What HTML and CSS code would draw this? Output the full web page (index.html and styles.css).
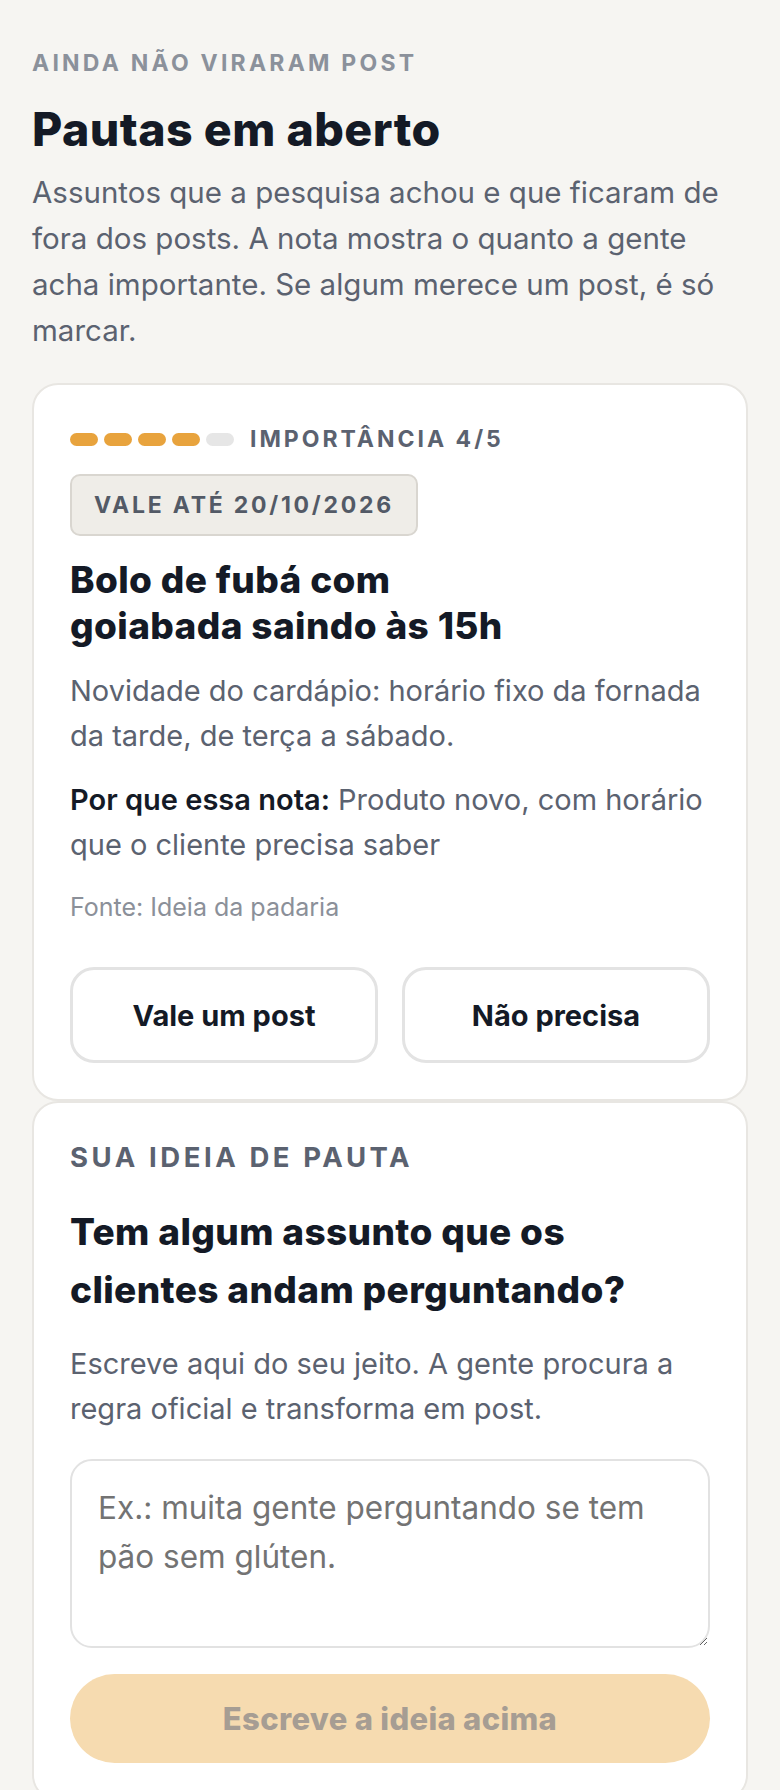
FILE: index.html
```html
<!DOCTYPE html>
<html lang="pt-BR">

<head>
    <meta charset="utf-8">
    <title>Pautas em aberto</title>
    <link rel="stylesheet" href="styles.css">
    <meta name="viewport" content="width=device-width, initial-scale=1">
</head>

<body>
    <main class="page">
        <p class="eyebrow">Ainda não viraram post</p>
        <h1 class="page-title">Pautas em aberto</h1>
        <p class="intro">
            Assuntos que a pesquisa achou e que ficaram de fora dos posts. A nota mostra o quanto a gente
            acha importante. Se algum merece um post, é só marcar.
        </p>

        <section class="card">
            <div class="score">
                <span class="pips">
                    <span class="pip on"></span>
                    <span class="pip on"></span>
                    <span class="pip on"></span>
                    <span class="pip on"></span>
                    <span class="pip"></span>
                </span>
                <span class="score-label">Importância 4/5</span>
            </div>
            <span class="badge">Vale até 20/10/2026</span>
            <h2 class="card-title short">Bolo de fubá com goiabada saindo às 15h</h2>
            <p class="card-text">Novidade do cardápio: horário fixo da fornada da tarde, de terça a sábado.</p>
            <p class="card-text"><strong>Por que essa nota:</strong> Produto novo, com horário que o cliente precisa saber</p>
            <p class="source">Fonte: Ideia da padaria</p>
            <div class="actions">
                <button class="btn">Vale um post</button>
                <button class="btn">Não precisa</button>
            </div>
        </section>

        <section class="card idea">
            <p class="card-eyebrow">Sua ideia de pauta</p>
            <h2 class="card-title tall">Tem algum assunto que os clientes andam perguntando?</h2>
            <p class="card-text">Escreve aqui do seu jeito. A gente procura a regra oficial e transforma em post.</p>
            <textarea class="idea-input" placeholder="Ex.: muita gente perguntando se tem pão sem glúten."></textarea>
            <button class="submit" disabled>Escreve a ideia acima</button>
        </section>
    </main>
</body>

</html>
```

FILE: styles.css
```css
* {
    box-sizing: border-box;
}

body {
    margin: 0;
    background: #f6f5f2;
    font-family: Inter, "Noto Sans", sans-serif;
    color: #141a26;
}

.page {
    padding: 48px 32px 40px;
}

.eyebrow {
    margin: 0;
    font-size: 23px;
    line-height: 30px;
    font-weight: 700;
    letter-spacing: 0.14em;
    text-transform: uppercase;
    color: #8b919b;
}

.page-title {
    margin: 25px 0 0;
    font-size: 46.5px;
    line-height: 53px;
    font-weight: 800;
    letter-spacing: 0.01em;
    color: #141a26;
}

.intro {
    margin: 13px 0 0;
    font-size: 29.5px;
    line-height: 46px;
    color: #5b6270;
}

.card {
    margin-top: 30px;
    background: #fff;
    border: 2px solid #e8e6e2;
    border-radius: 26px;
    padding: 36px 36px 36px;
}

.card + .card {
    margin-top: 0;
}

.score {
    display: flex;
    align-items: center;
    gap: 16px;
    height: 36px;
}

.pips {
    display: flex;
    gap: 6px;
}

.pip {
    width: 28px;
    height: 13px;
    border-radius: 7px;
    background: #e6e6e6;
}

.pip.on {
    background: #e8a33d;
}

.score-label {
    font-size: 23px;
    font-weight: 700;
    letter-spacing: 0.13em;
    text-transform: uppercase;
    color: #5b6270;
}

.badge {
    display: inline-block;
    margin-top: 17px;
    padding: 0 22px;
    height: 62px;
    line-height: 58px;
    border: 2px solid #d9d6d0;
    border-radius: 10px;
    background: #efede8;
    font-size: 23px;
    font-weight: 700;
    letter-spacing: 0.12em;
    text-transform: uppercase;
    color: #535a66;
}

.card-title {
    margin: 21px 0 0;
    font-size: 37px;
    line-height: 46px;
    font-weight: 800;
    letter-spacing: 0.01em;
    color: #141a26;
}

.card-title.short {
    max-width: 480px;
}

.card-title.tall {
    margin-top: 26px;
    line-height: 58px;
}

.card-text {
    margin: 19px 0 0;
    font-size: 29px;
    line-height: 45px;
    color: #5b6270;
}

.card-text strong {
    font-weight: 600;
    color: #141a26;
}

.source {
    margin: 24px 0 0;
    font-size: 25px;
    line-height: 32px;
    color: #8b9099;
}

.actions {
    display: grid;
    grid-template-columns: 1fr 1fr;
    gap: 24px;
    margin-top: 44px;
}

.btn {
    height: 96px;
    border: 3px solid #e3e3e3;
    border-radius: 24px;
    background: #fff;
    font-family: Inter, "Noto Sans", sans-serif;
    font-size: 29px;
    font-weight: 700;
    color: #141a26;
}

.idea {
    padding-top: 34px;
}

.card-eyebrow {
    margin: 0;
    font-size: 27.5px;
    line-height: 40px;
    font-weight: 700;
    letter-spacing: 0.13em;
    text-transform: uppercase;
    color: #5b6270;
}

.idea .card-text {
    margin-top: 22px;
}

.idea-input {
    display: block;
    width: 100%;
    height: 189px;
    margin-top: 28px;
    padding: 22px 26px;
    border: 2px solid #e2e2e2;
    border-radius: 22px;
    background: #fff;
    font-family: Inter, "Noto Sans", sans-serif;
    font-size: 31.5px;
    line-height: 49px;
    color: #141a26;
    resize: vertical;
}

.idea-input::placeholder {
    color: #737373;
}

.submit {
    display: block;
    width: 100%;
    height: 89px;
    margin-top: 26px;
    border: 0;
    border-radius: 45px;
    background: #f6dbb0;
    font-family: Inter, "Noto Sans", sans-serif;
    font-size: 31px;
    font-weight: 800;
    letter-spacing: 0.01em;
    color: #a69d93;
}
```
